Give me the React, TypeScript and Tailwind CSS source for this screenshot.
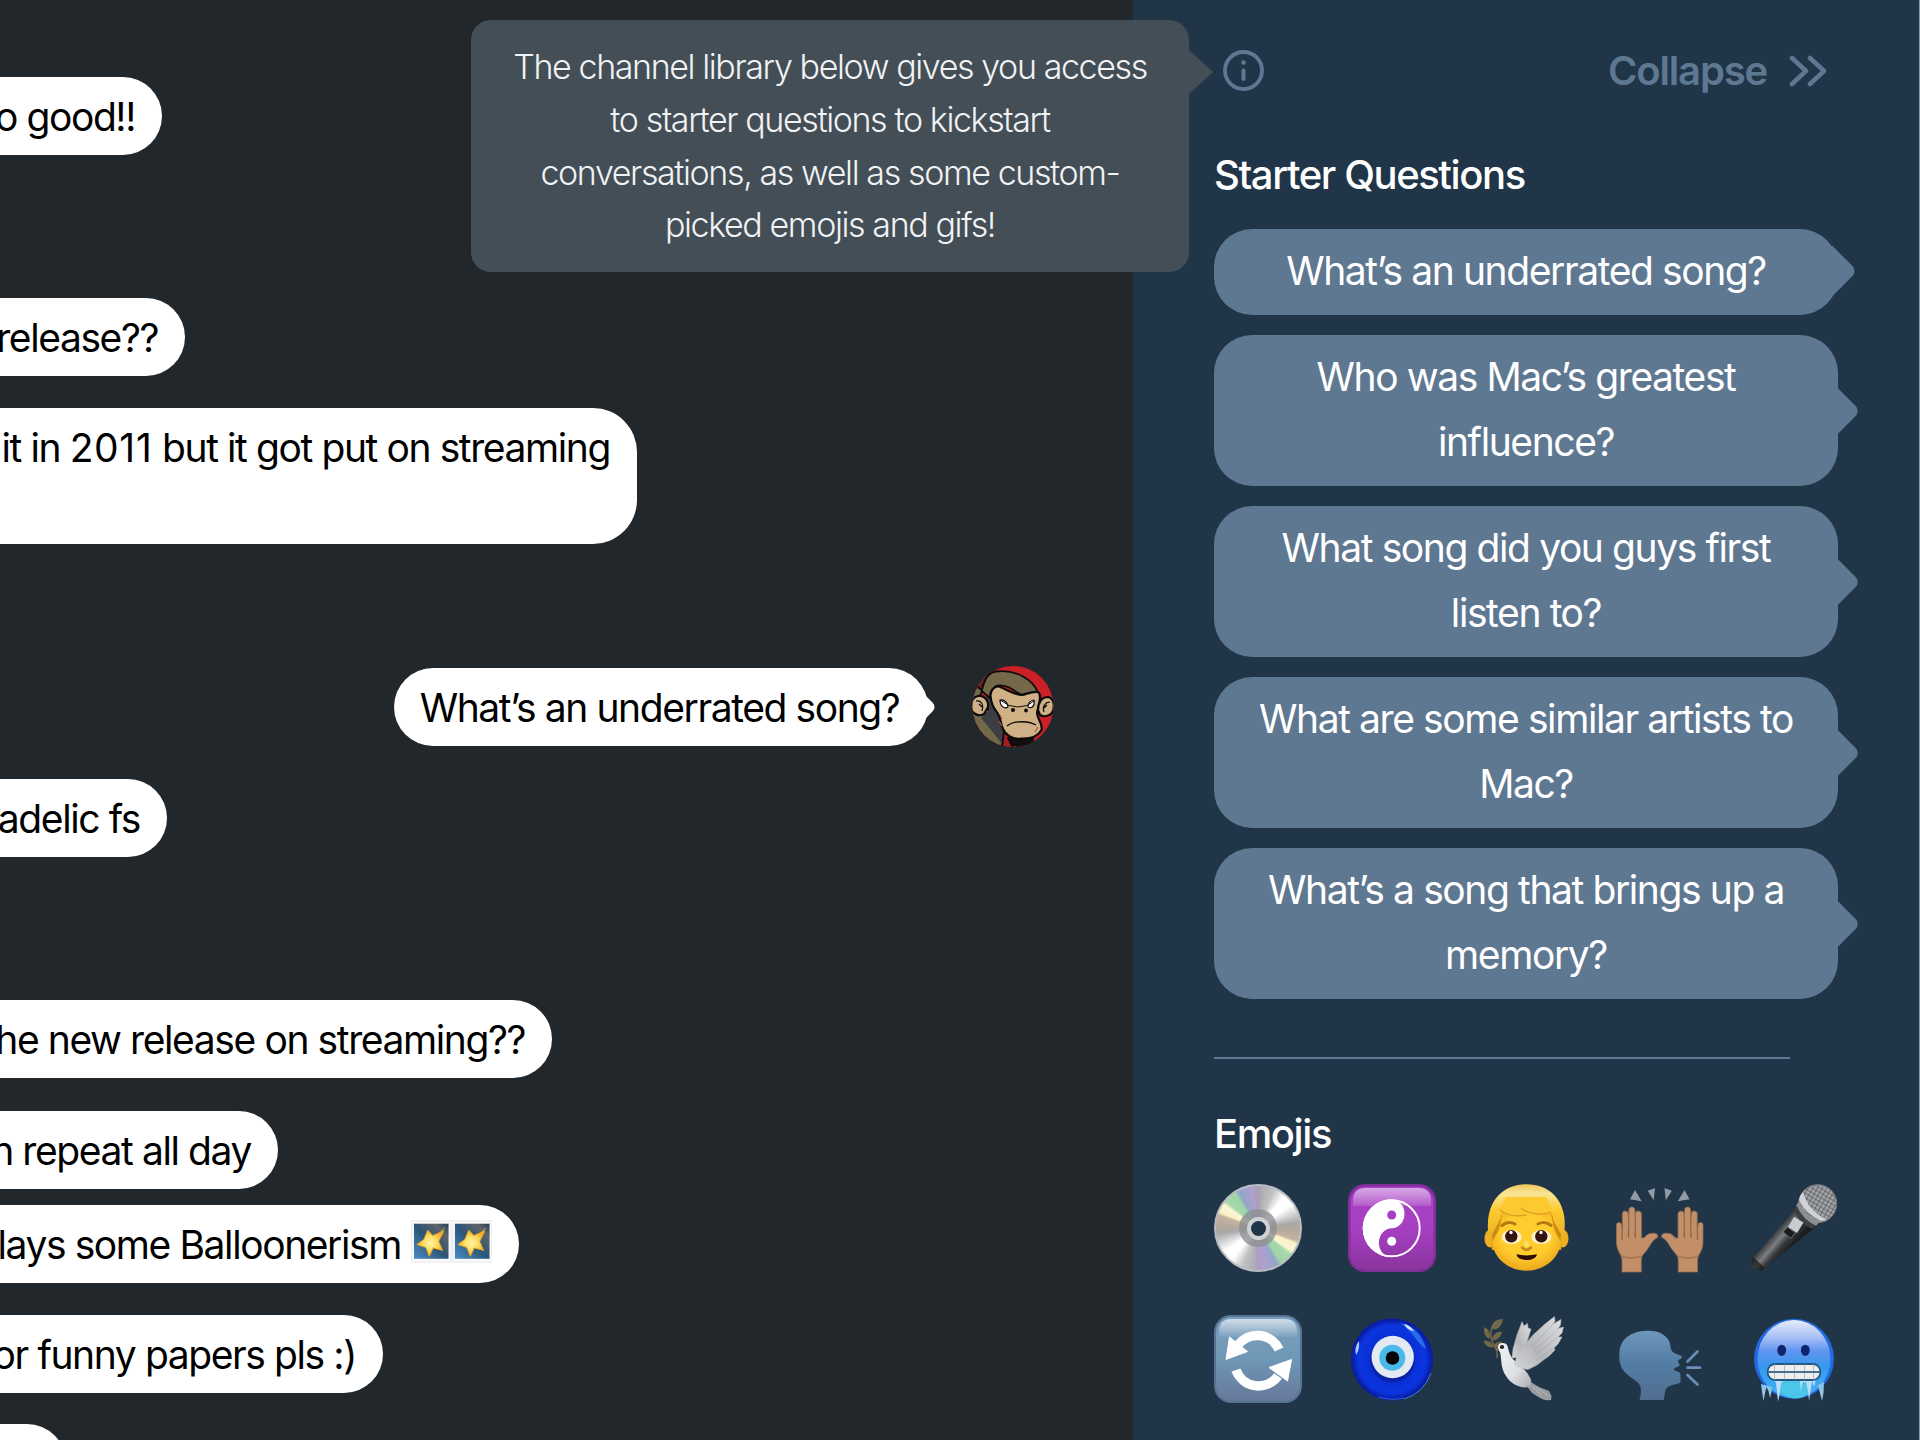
import type { ReactNode } from 'react';

interface Message {
  id: number;
  text: ReactNode;
  // bubble size and the space above it
  box: string;
  stars?: boolean;
  own?: boolean;
}

const messages: Message[] = [
  { id: 1, text: 'o good!!', box: 'mt-[77px] h-[78px] w-[162px] rounded-r-[39px]' },
  { id: 2, text: 'release??', box: 'mt-[143px] h-[78px] w-[185px] rounded-r-[39px]' },
  {
    id: 3,
    text: (
      <p>
        it in <span className="tracking-[0.017em]">2011</span> but it got put on streaming
      </p>
    ),
    box: 'mt-[32px] h-[136px] w-[637px] rounded-r-[44px]',
  },
  { id: 4, text: 'What’s an underrated song?', box: '', own: true },
  { id: 5, text: 'adelic fs', box: 'mt-[31px] h-[78px] w-[167px] rounded-r-[39px]' },
  { id: 6, text: 'he new release on streaming??', box: 'mt-[143px] h-[78px] w-[552px] rounded-r-[39px]' },
  { id: 7, text: 'n repeat all day', box: 'mt-[33px] h-[78px] w-[278px] rounded-r-[39px]' },
  { id: 8, text: 'lays some Balloonerism', box: 'mt-[16px] h-[78px] w-[519px] rounded-r-[39px]', stars: true },
  { id: 9, text: 'or funny papers pls :)', box: 'mt-[32px] h-[78px] w-[383px] rounded-r-[39px]' },
  { id: 10, text: '', box: 'mt-[31px] h-[78px] w-[66px] rounded-r-[44px]' },
];

const questions = [
  ['What’s an underrated song?'],
  ['Who was Mac’s greatest', 'influence?'],
  ['What song did you guys first', 'listen to?'],
  ['What are some similar artists to', 'Mac?'],
  ['What’s a song that brings up a', 'memory?'],
];

function StarEmoji() {
  return (
    <svg className="h-[43px] w-[40.500px] shrink-0" viewBox="0 0 41 43">
      <defs>
        <linearGradient id="night" x1="0" y1="1" x2="1" y2="0">
          <stop offset="0" stopColor="#4a8cc4" />
          <stop offset="0.5" stopColor="#2c5577" />
          <stop offset="0.8" stopColor="#5d6468" />
          <stop offset="1" stopColor="#23405a" />
        </linearGradient>
        <radialGradient id="starFill">
          <stop offset="0" stopColor="#fff3a6" />
          <stop offset="0.55" stopColor="#fbdc62" />
          <stop offset="1" stopColor="#f2ae27" />
        </radialGradient>
      </defs>
      <rect x="0.5" y="0.5" width="40" height="42" fill="#f7f8f9" stroke="#e8ebee" />
      <rect x="3" y="3.500" width="35" height="35.500" fill="url(#night)" />
      <path d="M20 21L35 6L28 20Z" fill="#c9a54a" opacity="0.7" />
      <path d="M17 10L22 15.500L33 11L28 21.500L32 30.500L22.500 28L18.500 36.500L15 27.500L6 24.500L13 19.500Z" fill="url(#starFill)" stroke="#f0a723" />
    </svg>
  );
}

function Avatar() {
  return (
    <svg className="h-[82px] w-[82px]" viewBox="0 0 82 82">
      <clipPath id="avatarClip">
        <circle cx="41" cy="40.500" r="40.500" />
      </clipPath>
      <g clipPath="url(#avatarClip)" stroke="#0b0b0b" strokeWidth="1.8" strokeLinejoin="round">
        <rect width="82" height="82" fill="#cb2026" stroke="none" />
        <path d="M0 0H20L8 30L30 66V82H0Z" fill="#74684a" />
        <path d="M0 14L12 6L18 8L10 24L4 20Z" fill="#6d1c1e" />
        <path d="M12 22L19 27L27 52L33 66L33 82L24 70L14 58L9 52L17 44Z" fill="#3d3e42" stroke="none" />
        <path d="M9.700 25C12 14 16 6 24 5.500C44 3 62 14 66 27C58 30 52 31 46 27C38 21 30 18 24 20C20 23 18 27 18 32Z" fill="#74684a" />
        <path d="M32 64L30 82H62L60 70Z" fill="#a31d20" />
        <path d="M36 72L48 74L62 70L60 76L56 79L52 78L48 82L44 79L40 80Z" fill="#141010" />
        <path d="M18.500 30C18 25 22 20 27 20.500C36 24 42 29 50 29C55 28 60 25 66 26C71 30 66 41 65 47C65 53 71 57 69.500 64C66 70 58 73 49 72.500C40 74 33 68 31 63C28 57 29 50 24 45C20 40 19 35 18.500 30Z" fill="#d0b085" strokeWidth="2.200" />
        <path d="M16 41C17 34 12 29 6 30C1 31 -2 36 -1 42C0 48 7 51 12 48Z" fill="#d0b085" strokeWidth="2.200" />
        <path d="M4 35C9 34 12 38 10 45M7 38L10 41" fill="none" strokeWidth="1.200" />
        <path d="M66 44C66 36 70 31 76 31C81 32 83 38 81 45C78 51 71 51 68 49Z" fill="#d0b085" strokeWidth="2.200" />
        <path d="M78 36C73 36 70 41 72 46M75 39L72 42" fill="none" strokeWidth="1.200" />
        <path d="M28 34C33 33 36 38 36 41C33 43 28 41 28 34Z" fill="#fff" strokeWidth="1.200" />
        <path d="M62 34C58 34 56 38 56 41C60 43 63 40 62 34Z" fill="#fff" strokeWidth="1.200" />
        <path d="M28 34L37 39.500L46 41L55 39.500L62 35" fill="none" strokeWidth="1" />
        <circle cx="41" cy="44" r="1.200" fill="#0b0b0b" />
        <circle cx="54" cy="44.500" r="1" fill="#0b0b0b" />
        <path d="M35 60C42 54 57 55 64 59" fill="none" strokeWidth="1.300" />
        <path d="M27 55L30 60M28 49L30 53M66 61L63 66" fill="none" stroke="#a9583a" strokeWidth="1.200" />
      </g>
    </svg>
  );
}

function DiscEmoji() {
  return (
    <div className="flex h-[88px] w-[88px] items-center justify-center rounded-full border-2 border-[#b9bcc0] bg-[conic-gradient(#a89fb4_0deg,#b4b6b8_12deg,#bfc1c3_22deg,#ffffff_40deg,#ffffff_55deg,#a8a9ab_82deg,#b5a89c_92deg,#c5b2a2_108deg,#f8f0c4_112deg,#fdf6d4_124deg,#a5d9ab_130deg,#9fd4a6_146deg,#93a7c9_152deg,#b09fd0_172deg,#ad9fc0_180deg,#b4b6b8_192deg,#bfc1c3_202deg,#ffffff_220deg,#ffffff_235deg,#a8a9ab_262deg,#b5a89c_272deg,#c5b2a2_288deg,#f8f0c4_292deg,#fdf6d4_304deg,#a5d9ab_310deg,#9fd4a6_326deg,#93a7c9_332deg,#b09fd0_352deg,#a89fb4_360deg)]">
      <div className="flex h-[38px] w-[38px] items-center justify-center rounded-full bg-[#8c8f92]/80">
        <div className="h-[23px] w-[23px] rounded-full border-4 border-[#cfd1d4] bg-[#203548]" />
      </div>
    </div>
  );
}

function Emoji({ children }: { children: ReactNode }) {
  return (
    <svg className="h-[88px] w-[88px] overflow-visible" viewBox="0 0 88 88">
      {children}
    </svg>
  );
}

function YinYangEmoji() {
  return (
    <Emoji>
      <defs>
        <linearGradient id="yyBox" x1="0" y1="0" x2="0" y2="1">
          <stop offset="0" stopColor="#a941c4" />
          <stop offset="0.5" stopColor="#a63fc2" />
          <stop offset="1" stopColor="#8c349f" />
        </linearGradient>
        <linearGradient id="yyShine" x1="0" y1="0" x2="0" y2="1">
          <stop offset="0" stopColor="#fff" stopOpacity="0.55" />
          <stop offset="1" stopColor="#fff" stopOpacity="0.14" />
        </linearGradient>
      </defs>
      <rect width="88" height="88" rx="17" fill="#81309a" />
      <rect x="2.500" y="2.500" width="83" height="83" rx="15" fill="url(#yyBox)" />
      <path d="M5 22V17Q5 4 18 4H70Q83 4 83 17V22Z" fill="url(#yyShine)" />
      <circle cx="43.700" cy="44.300" r="28" fill="none" stroke="#fff" strokeWidth="2" />
      <path d="M43.700 15.300A12.800 14.500 0 0 1 43.700 44.300A12.800 14.500 0 0 0 43.700 73.300A29 29 0 0 1 43.700 15.300Z" fill="#fff" />
      <circle cx="43.700" cy="31" r="4.500" fill="#a63fc2" />
      <circle cx="43.700" cy="57.300" r="4.500" fill="#fff" />
    </Emoji>
  );
}

function BoyEmoji() {
  return (
    <Emoji>
      <defs>
        <radialGradient id="boyFace" cx="0.5" cy="0.4" r="0.62">
          <stop offset="0.6" stopColor="#ffcb2d" />
          <stop offset="1" stopColor="#eaa51b" />
        </radialGradient>
        <linearGradient id="boyHair" x1="0" y1="0" x2="0" y2="1">
          <stop offset="0" stopColor="#eec458" />
          <stop offset="0.14" stopColor="#fae596" />
          <stop offset="0.4" stopColor="#fcca30" />
          <stop offset="1" stopColor="#e5a41d" />
        </linearGradient>
      </defs>
      <ellipse cx="8" cy="54.500" rx="5.500" ry="9" fill="#f0b022" />
      <ellipse cx="81" cy="54.500" rx="5.500" ry="9" fill="#f0b022" />
      <path d="M6 46C4 18 20 0.300 44.500 0.300C69 0.300 85 18 82.500 46L79 66H10Z" fill="url(#boyHair)" />
      <path d="M11 62L10 50L17 38L20 30L70 30L72 38L79 50L78 62Z" fill="#cf8b12" />
      <path d="M10 58L14.500 50C17 46 19 40 20 28H69C71 40 72 46 74.500 50L79 58C77 75 62 86.700 44.500 86.700C27 86.700 12 75 10 58Z" fill="url(#boyFace)" />
      <path d="M17 26C28 33 38 32 45 31C40 28 39 26 39 25C48 32 62 33 71 27L64 13H24Z" fill="#fcca30" />
      <path d="M18 26C27 33 37 32.500 45 31M39 24C48 31 60 31.500 69 28" fill="none" stroke="#dd9c20" strokeWidth="1.200" />
      <path d="M20 41.500C24 38 29 38 33 40M56 40C60 38 65 38 69 41.500" fill="none" stroke="#b67a12" strokeWidth="3" strokeLinecap="round" />
      <ellipse cx="29.700" cy="53" rx="10" ry="7" fill="#fbf0c8" />
      <ellipse cx="59.300" cy="53" rx="10" ry="7" fill="#fbf0c8" />
      <circle cx="29.300" cy="52.300" r="6.200" fill="#341310" />
      <circle cx="59.300" cy="52.300" r="6.200" fill="#341310" />
      <circle cx="29" cy="48.500" r="1.700" fill="#fff" />
      <circle cx="59" cy="48.500" r="1.700" fill="#fff" />
      <ellipse cx="44.500" cy="60" rx="2.500" ry="3" fill="#ffe066" />
      <path d="M40 63.500Q44.500 68 49 63.500" fill="none" stroke="#c9891a" strokeWidth="2.500" strokeLinecap="round" />
      <path d="M34.500 70.300Q44.500 72.500 55 70.300C54 78 35.500 78 34.500 70.300Z" fill="#2c0c06" />
    </Emoji>
  );
}

function Hand() {
  return (
    <>
      <path d="M6 88V76C6 70 0.500 68 0.500 58V41C0.500 37.500 5.300 37.500 5.500 41L6.300 47V30C6.300 26 12 26 12.300 30L12.800 45V26C13 22 18.700 22 19 26L19.300 45V30C19.500 26 25.200 26 25.500 30V54C29 55 31 49 35 49.500C39 48.500 43 50 41.500 53.500C36 56 34 62 31 66C27 71 25.300 72 25.300 76V88Z" fill="#c28f69" stroke="#8e6c4c" strokeWidth="0.800" />
      <path d="M6 47V56M12.500 45V54M19.200 45V54" stroke="#8d6443" strokeWidth="1.300" />
      <path d="M5 72Q15 76 26 72" fill="none" stroke="#a5754f" strokeWidth="1.500" />
      <path d="M14 15.300L19 6L25.700 17.300ZM31.700 6.700L39 4L37.700 16.300Z" fill="#929aa3" />
    </>
  );
}

function HandsEmoji() {
  return (
    <Emoji>
      <Hand />
      <g transform="translate(87.500 0) scale(-1 1)">
        <Hand />
      </g>
    </Emoji>
  );
}

function MicEmoji() {
  return (
    <Emoji>
      <defs>
        <linearGradient id="micBody" gradientUnits="userSpaceOnUse" x1="24" y1="50" x2="40" y2="64">
          <stop offset="0" stopColor="#3a3d40" />
          <stop offset="0.35" stopColor="#7b7f83" />
          <stop offset="0.65" stopColor="#38393c" />
          <stop offset="1" stopColor="#1c1d20" />
        </linearGradient>
        <pattern id="mesh" width="4" height="4" patternUnits="userSpaceOnUse" patternTransform="rotate(30)">
          <rect width="4" height="4" fill="#a2a5a8" />
          <path d="M0 0H4M0 0V4" stroke="#606366" strokeWidth="1.700" />
        </pattern>
      </defs>
      <path d="M47 23L67 42L12 86.500Q9 88 5 84L1 80Q0 78 1.500 75.500Z" fill="url(#micBody)" />
      <path d="M3 73L0.800 77.500Q0.500 80 5 84Q9 88 12 86.500L15 84Z" fill="#17181a" opacity="0.700" />
      <circle cx="67.700" cy="19.700" r="19" fill="url(#mesh)" stroke="#777b80" />
      <path d="M53 8Q50 11 49 16Q56 30 71 37L77 35.500Q58 27 53 8Z" fill="#d0d2d5" />
      <path d="M49 17L46 22Q52 36 66 42L70 37Q54 31 49 17Z" fill="#8b8e92" />
      <path d="M47 22Q52 35 66 42L62 45Q48 38 44 27Z" fill="#3c3e41" />
      <path d="M44 33L53.500 38.500L47 49L38 43Z" fill="#c9ccd0" />
      <path d="M37.500 43L45 48.500L41 54.500L33 48Z" fill="#1a1b1d" stroke="#77797c" strokeWidth="0.800" />
    </Emoji>
  );
}

function CycleEmoji() {
  return (
    <Emoji>
      <defs>
        <linearGradient id="cyBox" x1="0" y1="0" x2="0" y2="1">
          <stop offset="0" stopColor="#7ba0bf" />
          <stop offset="0.5" stopColor="#6f97b6" />
          <stop offset="1" stopColor="#66789a" />
        </linearGradient>
        <linearGradient id="cyShine" x1="0" y1="0" x2="0" y2="1">
          <stop offset="0" stopColor="#fff" stopOpacity="0.65" />
          <stop offset="1" stopColor="#fff" stopOpacity="0.05" />
        </linearGradient>
      </defs>
      <rect width="88" height="88" rx="17" fill="#567391" />
      <rect x="2" y="2" width="84" height="84" rx="15" fill="url(#cyBox)" />
      <path d="M5 22V17Q5 4 18 4H70Q83 4 83 17V22Z" fill="url(#cyShine)" />
      <path d="M65 34.500A24 24 0 0 0 24 30M22 55A24 24 0 0 0 64 61" fill="none" stroke="#fff" strokeWidth="9.500" />
      <path d="M12 44.500L15.500 22L33.500 36.500ZM77.500 44.500L73.500 66L55 52.500Z" fill="#fff" stroke="#fff" strokeLinejoin="round" />
    </Emoji>
  );
}

function EyeEmoji() {
  return (
    <Emoji>
      <defs>
        <radialGradient id="nazar">
          <stop offset="0.55" stopColor="#0a2fd6" />
          <stop offset="0.82" stopColor="#0b35df" />
          <stop offset="1" stopColor="#08189a" />
        </radialGradient>
      </defs>
      <circle cx="44" cy="44.500" r="41" fill="url(#nazar)" />
      <path d="M52 8Q72 12 78 34Q74 32 68 24Q62 15 52 8Z" fill="#2a6bea" />
      <path d="M56 9Q62 10 66 16Q60 16 56 9Z" fill="#d5e5ff" />
      <path d="M11 26Q6 32 8 40Q12 34 11 26Z" fill="#a9cdf8" />
      <path d="M83 58Q76 78 56 84" fill="none" stroke="#3b82dd" strokeWidth="1" />
      <path d="M30 82Q44 86 56 83" fill="none" stroke="#2a63d8" strokeWidth="1" />
      <circle cx="44.500" cy="45" r="22.500" fill="#081a8f" opacity="0.600" />
      <circle cx="44.700" cy="42" r="21.200" fill="#e3e9f1" />
      <circle cx="44.300" cy="42.700" r="13" fill="#48b9e8" />
      <circle cx="44.500" cy="43" r="6.800" fill="#050505" />
    </Emoji>
  );
}

function DoveEmoji() {
  return (
    <Emoji>
      <defs>
        <linearGradient id="wing" x1="0" y1="1" x2="1" y2="0">
          <stop offset="0" stopColor="#d5d6d9" />
          <stop offset="0.4" stopColor="#b4b6b9" />
          <stop offset="1" stopColor="#e2e3e6" />
        </linearGradient>
        <linearGradient id="doveBody" x1="0" y1="0" x2="1" y2="1">
          <stop offset="0" stopColor="#f2f3f5" />
          <stop offset="0.6" stopColor="#dddfe2" />
          <stop offset="1" stopColor="#a9abaf" />
        </linearGradient>
      </defs>
      <g fill="#74674a">
        <path d="M9.500 14C9 8 14 4 21 4C20 11 15 16 9.500 14ZM2.500 12C7 14 9 19 7.500 24C3 22 1 17 2.500 12ZM10 25C11 19 15 16 20 17C19 22 15 26 10 25ZM2 25.500C7 25 11 28 11.500 32C6 33 2 30 2 25.500ZM11 32C13 27 17 26 20 27C18 31 15 34 11 32Z" />
        <path d="M10 12Q7 22 12 30Q16 36 15 43" fill="none" stroke="#74674a" strokeWidth="1.500" />
      </g>
      <path d="M30 43L31 34L35 20L40 6.700L42 11L45.500 8.500L46 13L49 14L45 27L43 42Z" fill="url(#wing)" stroke="#aeb0b3" strokeWidth="0.600" />
      <path d="M47 66L57 72L67 76L69.500 81L69 85Q63 86 58 83L50 78L44 70Z" fill="#999b9e" />
      <path d="M54 72L66 81M50 71L60 81" stroke="#bbbdc0" strokeWidth="0.900" />
      <path d="M25.500 31C27 37 28 42 33 46C38 51 44 55 47 61C50 65 50 70 47 72C38 74 29 69 24 61C18 52 20 44 18 37C14 33 16 28 20.500 28C23 28 25 29 25.500 31Z" fill="url(#doveBody)" />
      <path d="M33 49C34 38 44 29 51 20L63 9L72.500 1.500L73 6L71 9L79 4.500L78.500 10L76 13.500L81.500 12L80 18L76 22L80 22L76 29L72 33L73 35L67 41L60 46L55 50L46 54.500C41 54 36 52 33 49Z" fill="url(#wing)" stroke="#b7b9bc" strokeWidth="0.600" />
      <path d="M50 32L71 9M52 36L76 14M53 40L75 23M54 45L71 34" stroke="#94979b" strokeWidth="0.800" opacity="0.500" />
      <ellipse cx="20" cy="32" rx="2.200" ry="2" fill="#222427" />
      <path d="M16 32L13.500 35L17 35Z" fill="#a2725a" />
    </Emoji>
  );
}

function SpeakEmoji() {
  return (
    <Emoji>
      <defs>
        <linearGradient id="speaker" x1="0" y1="0" x2="0" y2="1">
          <stop offset="0" stopColor="#6d97bb" />
          <stop offset="0.45" stopColor="#547ea4" />
          <stop offset="1" stopColor="#506d91" />
        </linearGradient>
      </defs>
      <path d="M23.500 85C25 79 26 73 23 69C19 64 11 61 7 55C3 49 3 42 3.500 37C4 25 14 16 31 15.700C42 15 51 20 53.500 27C55 31 54 35 57.500 37.500C61 40 65 39.500 66 42C66 44 62 44.500 62 46C62 48 64.500 49 63.500 50.500C63 52 59 52 57.500 54.500C60 57 64 56 64.500 59.500L64.500 67C62 70 53 69 50 74C48.500 77 49 81 47.500 85Z" fill="url(#speaker)" />
      <path d="M71.500 46.500L81.500 36.500M71.500 52.700H84M71.500 60L81.500 69.500" stroke="#688fb8" strokeWidth="2.700" strokeLinecap="round" />
    </Emoji>
  );
}

function ColdEmoji() {
  return (
    <Emoji>
      <defs>
        <linearGradient id="cold" x1="0" y1="0" x2="0" y2="1">
          <stop offset="0" stopColor="#e6ecfb" />
          <stop offset="0.22" stopColor="#a9c0f6" />
          <stop offset="0.4" stopColor="#5f94f0" />
          <stop offset="0.6" stopColor="#3598ee" />
          <stop offset="1" stopColor="#42b4f0" />
        </linearGradient>
        <linearGradient id="ice" x1="0" y1="0" x2="0" y2="1">
          <stop offset="0" stopColor="#7cc4f0" />
          <stop offset="1" stopColor="#a9c4dc" />
        </linearGradient>
      </defs>
      <circle cx="44" cy="43.700" r="40" fill="#2268e0" />
      <ellipse cx="44" cy="44" rx="36.500" ry="39" fill="url(#cold)" />
      <path d="M28 74Q27 64 36 64H52Q61 66 60 78Q52 84 44 83.500Q34 83 28 74Z" fill="#4bc6ea" />
      <ellipse cx="31.700" cy="35.300" rx="4.400" ry="5.600" fill="#10246e" />
      <ellipse cx="55.300" cy="35.300" rx="4.400" ry="5.600" fill="#10246e" />
      <path d="M24 65L26 68L27.500 82L28 86.500L29.500 80L31 68L34 65L50 66L51 77L52.500 67L56 67L58 76L59 86L60.500 76L62 66L64 72L66 64Z" fill="#bcdcf7" />
      <path d="M34 66H49L50 78Q40 84 31 76Z" fill="#4bc6ea" />
      <path d="M11 69L12.500 80L13.500 86L15 78L16.500 72L18.500 76L20 83L21.500 77L22 72ZM66 74L68 71L70 78L72 86L73.500 78L74 67L68 70Z" fill="url(#ice)" />
      <rect x="17.700" y="49" width="52.600" height="16" rx="7.500" fill="#eeeeee" stroke="#1f5a86" strokeWidth="1.800" />
      <path d="M24.500 49.500V64.500M34.500 49.500V64.500M44.500 49.500V64.500M54.500 49.500V64.500M63.500 49.500V64.500" stroke="#b8bcc0" />
      <path d="M18 57H70" stroke="#47708f" strokeWidth="2" />
    </Emoji>
  );
}

function MessageRow({ message }: { message: Message }) {
  if (message.own) {
    return (
      <div className="mt-[122px] flex h-[82px] items-center self-end pr-[79px]">
        <div className="relative mr-[44px] h-[78px] w-[534px]">
          <span className="absolute top-[27px] right-[-4px] h-6 w-6 rotate-45 rounded-tr-[6px] bg-white" />
          <div className="relative h-full rounded-full bg-white pr-[3px] text-center leading-[79px]">
            {message.text}
          </div>
        </div>
        <Avatar />
      </div>
    );
  }
  return (
    <div className={`flex shrink-0 justify-end overflow-hidden bg-white pr-[27px] leading-[79px] whitespace-nowrap ${message.box}`}>
      {message.text}
      {message.stars && (
        <span className="ml-[10px] flex pt-[15px]">
          <StarEmoji />
          <StarEmoji />
        </span>
      )}
    </div>
  );
}

function QuestionBubble({ lines }: { lines: string[] }) {
  const single = lines.length === 1;
  return (
    <button className={`relative block w-[624px] text-white ${single ? 'h-[86px]' : 'h-[151px]'}`}>
      <span
        className={`absolute rotate-45 rounded-tr-[7px] bg-[#5f7892] ${
          single ? 'top-[24px] right-[-12px] h-9 w-9' : 'top-[60px] right-[-16px] h-8 w-8'
        }`}
      />
      <span className="relative block h-full rounded-[38px] bg-[#5f7892] pt-[9px] leading-[65px]">
        {lines.map((line) => (
          <span key={line} className="block whitespace-nowrap">
            {line}
          </span>
        ))}
      </span>
    </button>
  );
}

function Tooltip() {
  return (
    <div className="absolute top-[-30px] right-[75px] h-[252px] w-[718px] rounded-[20px] bg-[#434e57] pt-[21px] text-center text-[34px] leading-[52.800px] font-light tracking-[-0.041em] text-[#f1f2f3]">
      The channel library below gives you access
      <br />
      to starter questions to kickstart
      <br />
      conversations, as well as some custom-
      <br />
      picked emojis and gifs!
      <svg className="absolute top-[30px] left-full h-[44px] w-[24px]" viewBox="0 0 24 44">
        <path d="M0 0L24 22L0 44Z" fill="#434e57" />
      </svg>
    </div>
  );
}

export default function App() {
  return (
    <div className="flex h-[1440px] w-[1920px] overflow-hidden bg-[#22272b] font-['Inter','Liberation_Sans',sans-serif] text-[39px] tracking-[-0.036em] text-black">
      {/* Chat */}
      <main className="flex w-[1133px] flex-col items-start overflow-hidden">
        {messages.map((message) => (
          <MessageRow key={message.id} message={message} />
        ))}
      </main>

      {/* Channel library */}
      <aside className="w-[787px] border-r border-[#8b99a5] bg-[#203548] pl-[81px]">
        <header className="flex h-[91px] items-end justify-between pr-[92px] text-[40px] text-[#5f7892]">
          <div className="relative ml-[9px] h-[41px] w-[41px]">
            <Tooltip />
            <svg className="h-[41px] w-[41px]" viewBox="0 0 41 41" fill="none" stroke="#5f7892">
              <circle cx="20.500" cy="20.500" r="18.500" strokeWidth="3.800" />
              <path d="M20.500 20.500V29" strokeWidth="4" strokeLinecap="round" />
              <circle cx="20.500" cy="12.500" r="2.300" fill="#5f7892" stroke="none" />
            </svg>
          </div>
          <button className="flex h-[41px] items-center gap-[22px] font-semibold tracking-[-0.029em]">
            Collapse
            <svg className="h-[32px] w-[38px]" viewBox="0 0 38 32" fill="none" stroke="#5f7892" strokeWidth="4.500" strokeLinecap="round" strokeLinejoin="round">
              <path d="M3 3L17 16L3 29M21 3L35 16L21 29" />
            </svg>
          </button>
        </header>

        <h2 className="mt-[59px] h-[50px] text-[40px] leading-[50px] font-medium text-white">Starter Questions</h2>
        <div className="mt-[29px] flex flex-col gap-[20px]">
          {questions.map((lines) => (
            <QuestionBubble key={lines[0]} lines={lines} />
          ))}
        </div>

        <hr className="mt-[58px] w-[576px] border-t-2 border-[#5f7892]" />

        <h2 className="mt-[50px] h-[50px] text-[40px] leading-[50px] font-medium text-white">Emojis</h2>
        <div className="mt-[25px] grid w-[624px] grid-cols-5 gap-x-[46px] gap-y-[43px]">
          <DiscEmoji />
          <YinYangEmoji />
          <BoyEmoji />
          <HandsEmoji />
          <MicEmoji />
          <CycleEmoji />
          <EyeEmoji />
          <DoveEmoji />
          <SpeakEmoji />
          <ColdEmoji />
        </div>
      </aside>
    </div>
  );
}
